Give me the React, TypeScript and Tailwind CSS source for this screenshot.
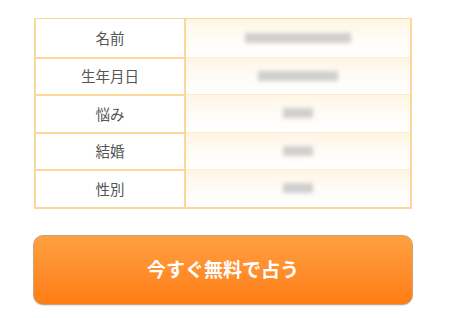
import React from "react";

const rows = [
  { label: "名前", w: "w-[106px]" },
  { label: "生年月日", w: "w-[80px]" },
  { label: "悩み", w: "w-[30px]" },
  { label: "結婚", w: "w-[30px]" },
  { label: "性別", w: "w-[30px]" },
];

export default function App() {
  return (
    <div
      className="w-[450px] h-[318px] bg-white flex flex-col pt-[18px] pl-[33px]"
      style={{ fontFamily: '"Noto Sans CJK JP", "Noto Sans", sans-serif' }}
    >
      <div className="ml-[1px] w-[378px] border-2 border-t border-[#fdd79a] flex flex-col">
        {rows.map((r, i) => (
          <div key={i} className="flex h-[37.5px]">
            <div
              className={`w-[150px] shrink-0 border-r-2 border-[#fdd79a] flex items-center justify-center text-[14.5px] text-[#555] ${i > 0 ? "border-t-2" : ""}`}
            >
              {r.label}
            </div>
            <div
              className={`flex-1 flex items-center justify-center bg-gradient-to-b from-[#fff5e3] via-[#fffcf6] to-white ${i > 0 ? "border-t border-[#fdebc9]" : ""}`}
            >
              <div className={`${r.w} h-[10px] bg-[#c4c4c4] blur-[2px] opacity-80`} />
            </div>
          </div>
        ))}
      </div>
      <button className="mt-[26px] w-[380px] h-[70px] rounded-[10px] border border-[#c9a27a] bg-gradient-to-b from-[#ffa040] to-[#ff7d12] text-white text-[19px] font-bold flex items-center justify-center shadow-[0_1px_1px_rgba(0,0,0,0.1)]">
        今すぐ無料で占う
      </button>
    </div>
  );
}
